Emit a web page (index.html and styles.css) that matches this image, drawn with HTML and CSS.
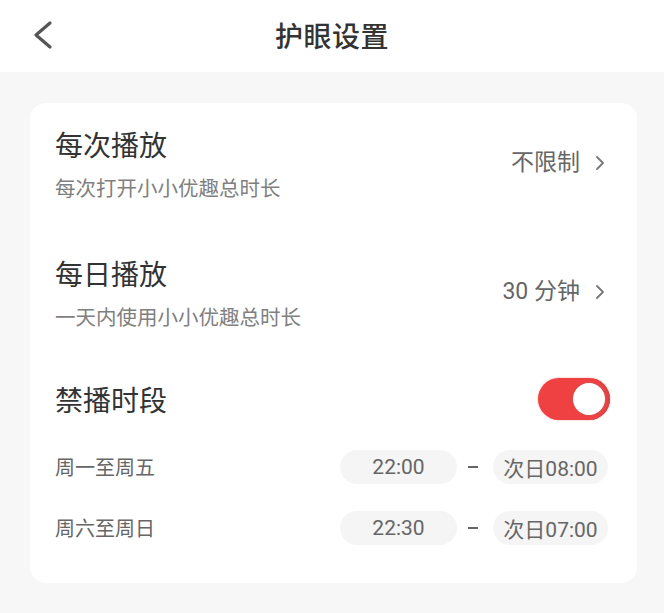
FILE: index.html
```html
<!DOCTYPE html>
<html lang="zh-CN">
<head>
<meta charset="utf-8">
<title>护眼设置</title>
<link rel="stylesheet" href="styles.css">
</head>
<body>
<header class="topbar">
  <button class="back" aria-label="返回">
    <svg width="24" height="32" viewBox="0 0 24 32"><polyline points="18,4 4,16 18,28" fill="none" stroke="#555" stroke-width="3.2" stroke-linecap="round" stroke-linejoin="round"/></svg>
  </button>
  <h1 class="title">护眼设置</h1>
</header>
<main class="page">
  <section class="card">
    <div class="row">
      <div class="row-text">
        <div class="row-title">每次播放</div>
        <div class="row-sub">每次打开小小优趣总时长</div>
      </div>
      <div class="row-value">不限制<svg class="chev" width="12" height="16" viewBox="0 0 12 16"><polyline points="3,2 9,8 3,14" fill="none" stroke="#777" stroke-width="1.8" stroke-linecap="round" stroke-linejoin="round"/></svg></div>
    </div>
    <div class="row">
      <div class="row-text">
        <div class="row-title">每日播放</div>
        <div class="row-sub">一天内使用小小优趣总时长</div>
      </div>
      <div class="row-value">30 分钟<svg class="chev" width="12" height="16" viewBox="0 0 12 16"><polyline points="3,2 9,8 3,14" fill="none" stroke="#777" stroke-width="1.8" stroke-linecap="round" stroke-linejoin="round"/></svg></div>
    </div>
    <div class="row row-switch">
      <div class="row-title">禁播时段</div>
      <div class="switch"><span class="knob"></span></div>
    </div>
    <div class="slot">
      <div class="slot-label">周一至周五</div>
      <div class="slot-times">
        <span class="pill pill-a">22:00</span>
        <span class="dash"></span>
        <span class="pill pill-b">次日08:00</span>
      </div>
    </div>
    <div class="slot">
      <div class="slot-label">周六至周日</div>
      <div class="slot-times">
        <span class="pill pill-a">22:30</span>
        <span class="dash"></span>
        <span class="pill pill-b">次日07:00</span>
      </div>
    </div>
  </section>
</main>
</body>
</html>
```
FILE: styles.css
```css
* { box-sizing: border-box; }
html, body { margin: 0; padding: 0; }
body {
  width: 664px;
  height: 613px;
  background: #f7f7f7;
  font-family: "Noto Sans CJK SC", "Noto Sans", sans-serif;
  color: #333;
  overflow: hidden;
}
.topbar {
  height: 72px;
  background: #fff;
  display: flex;
  align-items: center;
  justify-content: center;
  position: relative;
  padding-bottom: 3px;
}
.back {
  position: absolute;
  left: 32px;
  top: 19px;
  border: 0;
  background: none;
  padding: 0;
  width: 24px;
  height: 32px;
}
.back svg { display: block; }
.title {
  margin: 0;
  font-size: 28px;
  font-weight: 500;
  color: #333;
  line-height: 40px;
  letter-spacing: 0.5px;
}
.page {
  padding: 31px 27px 0 30px;
}
.card {
  background: #fff;
  border-radius: 16px;
  padding: 21px 27px 38px 25px;
  display: flex;
  flex-direction: column;
}
.row {
  display: flex;
  align-items: center;
  justify-content: space-between;
}
.row + .row { margin-top: 52px; }
.row-title {
  font-size: 28px;
  line-height: 40px;
  color: #333;
}
.row-sub {
  margin-top: 9px;
  font-size: 20.5px;
  line-height: 28px;
  color: #808080;
}
.row-value {
  display: flex;
  align-items: center;
  font-family: "Roboto", "Noto Sans CJK SC", sans-serif;
  font-size: 23px;
  line-height: 32px;
  color: #666;
  margin-right: 4px;
}
.chev { margin-left: 14px; display: block; }
.row + .row-switch { margin-top: 48px; }
.switch {
  width: 72px;
  height: 42px;
  border-radius: 21px;
  background: #ef4141;
  box-shadow: inset -2px 0 0 #cf4747, 0 0 2px rgba(239,65,65,0.5);
  display: flex;
  align-items: center;
  justify-content: flex-end;
  padding-right: 5px;
}
.knob {
  width: 32px;
  height: 32px;
  border-radius: 50%;
  background: #fff;
  box-shadow: 0 0 0 1px #d65050;
}
.slot {
  display: flex;
  align-items: center;
  justify-content: space-between;
  margin-top: 30px;
}
.slot + .slot { margin-top: 27px; }
.slot-label {
  font-size: 20px;
  line-height: 28px;
  color: #666;
}
.slot-times {
  display: flex;
  align-items: center;
  margin-right: 2px;
}
.pill {
  height: 34px;
  border-radius: 17px;
  background: #f5f5f5;
  display: flex;
  align-items: center;
  justify-content: center;
  font-family: "Roboto", "Noto Sans CJK SC", sans-serif;
  font-size: 21px;
  color: #666;
}
.pill-a { width: 117px; }
.pill-b { width: 115px; }
.dash {
  width: 10px;
  height: 2px;
  background: #666;
  margin: 0 15px 0 11px;
}
```
